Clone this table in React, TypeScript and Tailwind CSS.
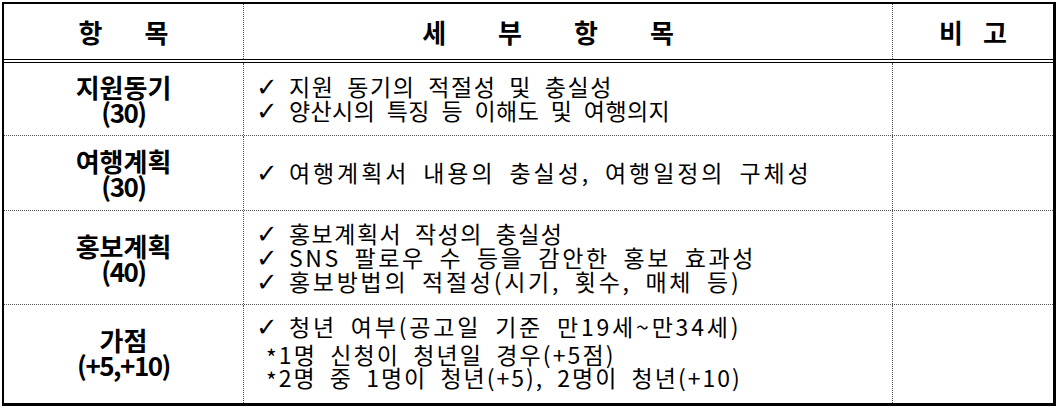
type Line = { text: string; track: string }

const rows: {
  title: string
  score: string
  height: string
  shift: string
  lines: Line[]
  notes: Line[]
}[] = [
  {
    title: '지원동기',
    score: '(30)',
    height: 'h-[73px]',
    shift: '',
    lines: [
      { text: '지원 동기의 적절성 및 충실성', track: 'tracking-[1.6px]' },
      { text: '양산시의 특징 등 이해도 및 여행의지', track: 'tracking-[0.4px]' },
    ],
    notes: [],
  },
  {
    title: '여행계획',
    score: '(30)',
    height: 'h-[75px]',
    shift: '',
    lines: [{ text: '여행계획서 내용의 충실성, 여행일정의 구체성', track: 'tracking-[2.9px]' }],
    notes: [],
  },
  {
    title: '홍보계획',
    score: '(40)',
    height: 'h-[94px]',
    shift: '',
    lines: [
      { text: '홍보계획서 작성의 충실성', track: 'tracking-[1.5px]' },
      { text: 'SNS 팔로우 수 등을 감안한 홍보 효과성', track: 'tracking-[2.6px]' },
      { text: '홍보방법의 적절성(시기, 횟수, 매체 등)', track: 'tracking-[2.7px]' },
    ],
    notes: [],
  },
  {
    title: '가점',
    score: '(+5,+10)',
    height: 'h-[98px]',
    shift: 'pb-[5px]',
    lines: [{ text: '청년 여부(공고일 기준 만19세~만34세)', track: 'tracking-[2.8px]' }],
    notes: [
      { text: '1명 신청이 청년일 경우(+5점)', track: 'tracking-[2.1px]' },
      { text: '2명 중 1명이 청년(+5), 2명이 청년(+10)', track: 'tracking-[2px]' },
    ],
  },
]

export default function App() {
  return (
    <div className="w-[1058px] h-[410px] bg-white pl-[2px] pt-[2px] font-['Noto_Sans_CJK_KR',sans-serif] text-black">
      <div className="w-[1054px] border-t-2 border-l-2 border-r-[3px] border-b-[3px] border-black">
        {/* Header */}
        <div className="grid grid-cols-[240px_649px_160px] h-[59px] border-b-4 border-double border-black text-[26px] font-bold">
          <div className="flex items-center justify-center gap-[42px] border-r border-dotted border-[#555]">
            <span>항</span>
            <span>목</span>
          </div>
          <div className="flex items-center justify-center gap-[52px] border-r border-dotted border-[#555] pr-[40px]">
            <span>세</span>
            <span>부</span>
            <span>항</span>
            <span>목</span>
          </div>
          <div className="flex items-center justify-center gap-[20px]">
            <span>비</span>
            <span>고</span>
          </div>
        </div>

        {rows.map((row, i) => (
          <div
            key={row.title}
            className={`grid grid-cols-[240px_649px_160px] ${row.height} ${
              i < rows.length - 1 ? 'border-b border-dotted border-[#555]' : ''
            }`}
          >
            <div className={`flex flex-col items-center justify-center border-r border-dotted border-[#555] font-bold text-[26px] leading-[25px] ${row.shift}`}>
              <span>{row.title}</span>
              <span className="tracking-[-1.5px]">{row.score}</span>
            </div>
            <div className={`flex flex-col justify-center pl-[12px] border-r border-dotted border-[#555] text-[23px] leading-[23px] [word-spacing:6px] ${row.shift}`}>
              {row.lines.map((line) => (
                <div key={line.text} className={row.notes.length ? 'mb-[4px]' : ''}>
                  <span className="font-['DejaVu_Sans',sans-serif] font-bold text-[26px]">✓</span>{' '}
                  <span className={line.track}>{line.text}</span>
                </div>
              ))}
              {row.notes.map((note) => (
                <div key={note.text} className={`pl-[10px] ${note.track}`}>
                  <span className="inline-block translate-y-[3px]">*</span>
                  {note.text}
                </div>
              ))}
            </div>
            <div />
          </div>
        ))}
      </div>
    </div>
  )
}
